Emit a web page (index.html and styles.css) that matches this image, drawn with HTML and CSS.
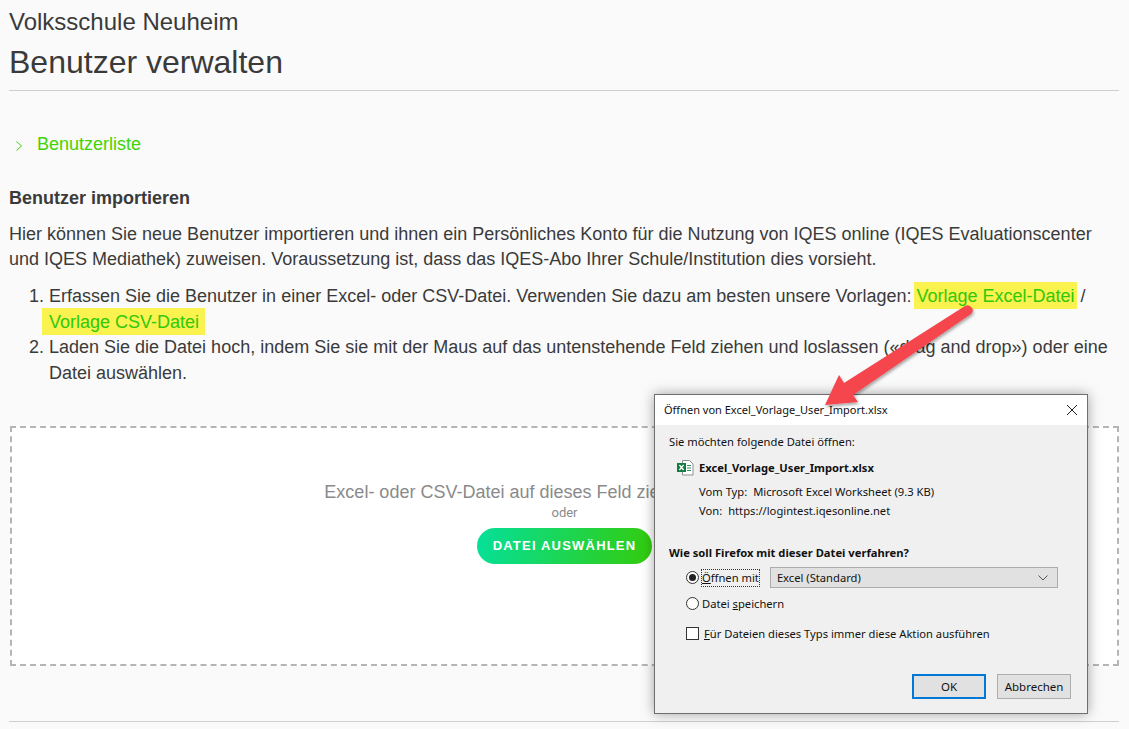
FILE: index.html
```html
<!DOCTYPE html>
<html lang="de">
<head>
    <meta charset="UTF-8">
    <title>Benutzer verwalten</title>
    <link rel="stylesheet" href="styles.css">
</head>
<body>

<header class="page-head">
    <div class="school">Volksschule Neuheim</div>
    <h1>Benutzer verwalten</h1>
</header>

<a class="list-link" href="#">
    <svg class="chevron" width="8" height="12" viewBox="0 0 8 12"><path d="M1.5 1.5 6.5 6 1.5 10.5" fill="none" stroke="#44d40a" stroke-width="1"/></svg>
    Benutzerliste
</a>

<h2>Benutzer importieren</h2>
<p class="intro">Hier können Sie neue Benutzer importieren und ihnen ein Persönliches Konto für die Nutzung von IQES online (IQES Evaluationscenter und IQES Mediathek) zuweisen. Voraussetzung ist, dass das IQES-Abo Ihrer Schule/Institution dies vorsieht.</p>

<ol class="steps">
    <li>Erfassen Sie die Benutzer in einer Excel- oder CSV-Datei. Verwenden Sie dazu am besten unsere Vorlagen: <a class="mark mark-excel" href="#">Vorlage Excel-Datei</a> / <a class="mark mark-csv" href="#">Vorlage CSV-Datei</a></li>
    <li>Laden Sie die Datei hoch, indem Sie sie mit der Maus auf das untenstehende Feld ziehen und loslassen («drag and drop») oder eine Datei auswählen.</li>
</ol>

<div class="dropzone">
    <div class="drop-title">Excel- oder CSV-Datei auf dieses Feld ziehen und loslassen</div>
    <div class="drop-or">oder</div>
    <button type="button" class="pick-btn">DATEI AUSWÄHLEN</button>
</div>

<div class="page-foot"></div>

<div class="dialog">
    <div class="dialog-title">
        <span>Öffnen von Excel_Vorlage_User_Import.xlsx</span>
        <svg width="12" height="12" viewBox="0 0 12 12"><path d="M1 1 11 11M11 1 1 11" stroke="#222" stroke-width="1" fill="none"/></svg>
    </div>
    <div class="dialog-body">
        <div class="dialog-lead">Sie möchten folgende Datei öffnen:</div>
        <div class="file-name">
            <svg width="17" height="16" viewBox="0 0 17 16">
                <path d="M5.500.500h7l3.500 3.500v11h-10.500z" fill="#fff" stroke="#8f8f8f"/>
                <path d="M10 5.500h4M10 8h4M10 10.500h4" stroke="#2f8a5c" stroke-width="1"/>
                <rect x="0" y="3" width="9" height="9" fill="#107c41"/>
                <path d="M2.400 5 6.600 10M6.600 5 2.400 10" stroke="#fff" stroke-width="1.300"/>
            </svg>
            <b>Excel_Vorlage_User_Import.xlsx</b>
        </div>
        <div class="file-meta">
            <div><span class="meta-type">Vom Typ:</span>Microsoft Excel Worksheet (9.3 KB)</div>
            <div><span class="meta-from">Von:</span>https://logintest.iqesonline.net</div>
        </div>
        <div class="dialog-question">Wie soll Firefox mit dieser Datei verfahren?</div>
        <div class="option-row">
            <span class="radio checked"></span>
            <span class="focus-label"><u>Ö</u>ffnen mit</span>
            <div class="select">Excel (Standard)
                <svg width="10" height="6" viewBox="0 0 10 6"><path d="M.5.500 5 5 9.500.500" fill="none" stroke="#555"/></svg>
            </div>
        </div>
        <div class="option-row save">
            <span class="radio"></span>
            <span class="plain-label">Datei <u>s</u>peichern</span>
        </div>
        <div class="option-row always">
            <span class="check"></span>
            <span><u>F</u>ür Dateien dieses Typs immer diese Aktion ausführen</span>
        </div>
        <div class="dialog-buttons">
            <button type="button" class="win-btn default">OK</button>
            <button type="button" class="win-btn">Abbrechen</button>
        </div>
    </div>
</div>

<svg class="arrow" width="170" height="115" viewBox="0 0 170 115">
    <defs>
        <filter id="arrow-shadow" x="-10%" y="-10%" width="125%" height="125%">
            <feDropShadow dx="1" dy="2" stdDeviation="1.500" flood-color="#000" flood-opacity="0.35"/>
        </filter>
    </defs>
    <path d="M155 6 Q159 4 162 8 Q164 11 161 14 L43 95 L48 102 L15 105 L29 75 L34 83 Z" fill="#f5444e" filter="url(#arrow-shadow)"/>
</svg>

</body>
</html>
```

FILE: styles.css
```css
body {
    margin: 0;
    height: 729px;
    overflow: hidden;
    padding: 0 10px 0 9px;
    background-color: #fafafa;
    color: #3a3a3a;
    font-family: "Liberation Sans", Arial, sans-serif;
    font-size: 18px;
    line-height: 25.6px;
    position: relative;
}
.page-head {
    border-bottom: 1px solid #cfcfcf;
    height: 91px;
    padding-top: 8px;
    box-sizing: border-box;
}
.school {
    font-size: 24px;
    line-height: 28px;
}
h1 {
    margin: 0;
    font-size: 32px;
    font-weight: normal;
    line-height: 52px;
}
.list-link {
    display: flex;
    align-items: center;
    gap: 14px;
    margin-top: 41px;
    padding-left: 6px;
    color: #3fd406;
    text-decoration: none;
}
.chevron {
    margin-top: 3px;
}
h2 {
    margin: 27px 0 0;
    font-size: 18px;
    line-height: 26px;
}
.intro {
    margin: 11px 0 0;
}
.steps {
    margin: 11px 0 0;
    padding-left: 40px;
}
.mark {
    background-color: #f9f24f;
    color: #2fc90a;
    text-decoration: none;
    padding-top: 3.5px;
    padding-bottom: 3.5px;
}
.mark-excel {
    padding-left: 3px;
    padding-right: 2px;
    margin-left: -3px;
    margin-right: -1px;
}
.mark-csv {
    padding-left: 7px;
    padding-right: 6px;
    margin-left: -7px;
}
.dropzone {
    margin: 40px 0 0 1px;
    height: 240px;
    box-sizing: border-box;
    border: 2px dashed #b5b5b5;
    background-color: #fff;
    text-align: center;
    padding-top: 52px;
}
.drop-title {
    color: #8a8a8a;
}
.drop-or {
    color: #8a8a8a;
    font-family: Roboto, sans-serif;
    font-size: 13px;
    line-height: 16px;
    margin-top: -1px;
}
.pick-btn {
    margin-top: 7px;
    width: 175px;
    height: 36px;
    border: none;
    border-radius: 18px;
    background: linear-gradient(100deg, #05e09a, #33cb0c);
    color: #fff;
    font-family: "Liberation Sans", Arial, sans-serif;
    font-size: 13px;
    font-weight: bold;
    letter-spacing: 1.2px;
}
.page-foot {
    margin-top: 55px;
    border-top: 1px solid #cfcfcf;
}

/* windows file dialog, lies over the page */
.dialog {
    position: absolute;
    left: 654px;
    top: 394px;
    width: 432px;
    height: 318px;
    border: 1px solid #6f6f6f;
    background-color: #f0f0f0;
    box-shadow: 0 0 12px rgba(0, 0, 0, 0.35);
    color: #111;
    font-family: "Noto Sans", sans-serif;
    font-size: 11.2px;
    line-height: 16px;
}
.dialog-title {
    display: flex;
    justify-content: space-between;
    align-items: center;
    height: 30px;
    padding: 0 9px 0 9px;
    background-color: #fff;
    font-size: 11px;
}
.dialog-body {
    padding: 9px 15px 0 14px;
}
.file-name {
    display: flex;
    align-items: center;
    gap: 5px;
    margin: 10px 0 0 8px;
}
.file-meta {
    margin: 8px 0 0 30px;
}
.file-meta div {
    height: 19px;
}
.meta-type {
    margin-right: 6px;
}
.meta-from {
    margin-right: 6px;
}
.dialog-question {
    margin-top: 23px;
    font-weight: bold;
}
.option-row {
    display: flex;
    align-items: center;
    margin: 6px 0 0 17px;
    height: 21px;
}
.option-row.save {
    margin-top: 5px;
}
.option-row.always {
    margin-top: 9px;
}
.radio {
    width: 11px;
    height: 11px;
    border: 1px solid #333;
    border-radius: 50%;
    background-color: #fff;
    position: relative;
    margin-right: 3px;
}
.radio.checked::after {
    content: "";
    position: absolute;
    left: 2px;
    top: 2px;
    width: 7px;
    height: 7px;
    border-radius: 50%;
    background-color: #222;
}
.focus-label {
    outline: 1px dotted #333;
    margin-right: 11px;
}
.select {
    display: flex;
    justify-content: space-between;
    align-items: center;
    width: 271px;
    height: 19px;
    padding: 0 9px 0 6px;
    border: 1px solid #adadad;
    background-color: #e1e1e1;
}
.check {
    width: 11px;
    height: 11px;
    border: 1px solid #333;
    background-color: #fff;
    margin-right: 5px;
}
.dialog-buttons {
    display: flex;
    justify-content: flex-end;
    gap: 11px;
    margin: 30px 1px 0 0;
}
.win-btn {
    width: 74px;
    height: 25px;
    border: 1px solid #adadad;
    background-color: #e1e1e1;
    color: #111;
    font-family: "Noto Sans", sans-serif;
    font-size: 11.5px;
    padding: 0;
}
.win-btn.default {
    border: 2px solid #0078d7;
}
.arrow {
    position: absolute;
    left: 810px;
    top: 300px;
}
```
